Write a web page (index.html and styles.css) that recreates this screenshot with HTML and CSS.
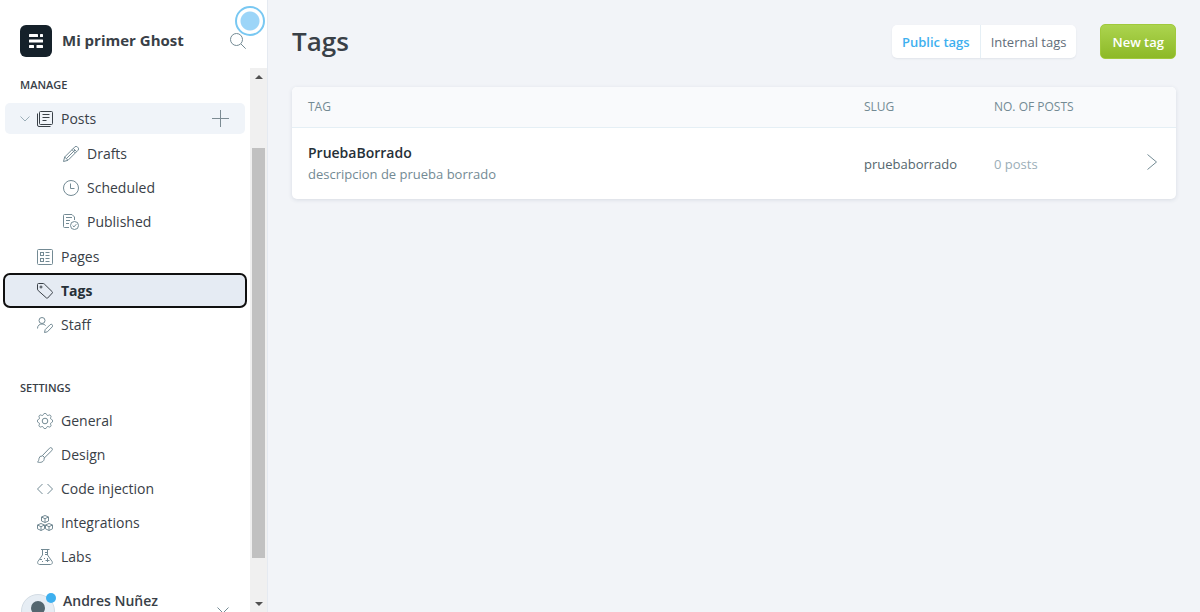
FILE: index.html
```html
<!DOCTYPE html>
<html lang="en">
<head>
<meta charset="utf-8">
<title>Tags - Mi primer Ghost</title>
<link rel="stylesheet" href="styles.css">
</head>
<body>
<div class="app">
  <aside class="sidebar">
    <header class="brand">
      <svg class="brand-logo" viewBox="0 0 32 32" aria-hidden="true">
        <rect width="32" height="32" rx="6" fill="#15212a"/>
        <g fill="#fff"><rect x="9" y="9" width="9" height="3" rx=".6"/><rect x="20" y="9" width="3" height="3" rx=".6"/><rect x="9" y="14.500" width="14" height="3" rx=".6"/><rect x="9" y="20" width="5" height="3" rx=".6"/><rect x="16.500" y="20" width="6.500" height="3" rx=".6"/></g>
      </svg>
      <span class="brand-name">Mi primer Ghost</span>
      <button class="icon-button search" type="button" aria-label="Search">
        <svg class="icon" viewBox="0 0 16 16"><circle cx="6.500" cy="6.500" r="6"/><path d="M11 11l4.700 4.700"/></svg>
      </button>
      <span class="beacon"></span>
    </header>
    <div class="sidebar-body">
      <nav class="nav">
        <h2 class="nav-title">Manage</h2>
        <ul class="nav-list">
          <li>
            <div class="nav-item nav-item-open">
              <button class="icon-button toggle" type="button" aria-label="Toggle posts"><svg class="icon-chevron" viewBox="0 0 10 6"><path d="M.5.5L5 5 9.500.5"/></svg></button>
              <a class="nav-link" href="#posts"><svg class="icon dark" viewBox="0 0 16 16"><rect x="2.500" y=".5" width="13" height="13" rx="1"/><path d="M.5 2.500V14a1.500 1.500 0 0 0 1.500 1.500h11.500M5.500 3.500h7M5.500 6.500h7M5.500 9.500h4"/></svg>Posts</a>
              <button class="icon-button add" type="button" aria-label="New post"><svg class="icon-plus" viewBox="0 0 17 17"><path d="M8.500 0v17M0 8.500h17"/></svg></button>
            </div>
            <ul class="nav-list sub-list">
              <li><a class="nav-item nav-link" href="#drafts"><svg class="icon" viewBox="0 0 16 16"><path d="M.5 15.500l1.200-4.500L11.600 1.100a2 2 0 0 1 3 0l.3.300a2 2 0 0 1 0 3L5 14.300zM1.700 11L5 14.300M10.300 2.400l3.300 3.300M3.400 12.600l8.600-8.600M9 3.700l3.300 3.300"/></svg>Drafts</a></li>
              <li><a class="nav-item nav-link" href="#scheduled"><svg class="icon" viewBox="0 0 16 16"><circle cx="8" cy="8" r="7.500"/><path d="M7.500 3.500v5h4"/></svg>Scheduled</a></li>
              <li><a class="nav-item nav-link" href="#published"><svg class="icon" viewBox="0 0 16 16"><path d="M6 13.500H1.500a1 1 0 0 1-1-1v-11a1 1 0 0 1 1-1H9L11.500 3v3M3 3.500h6M3 6.500h4M3 9.500h3"/><circle cx="11.500" cy="11.500" r="4"/><path d="M9.700 11.600l1.300 1.300 2.300-2.700"/></svg>Published</a></li>
            </ul>
          </li>
          <li><a class="nav-item nav-link" href="#pages"><svg class="icon" viewBox="0 0 16 16"><rect x=".5" y=".5" width="15" height="15" rx="1"/><rect x="3.500" y="3.500" width="3" height="3"/><rect x="3.500" y="9.500" width="3" height="3"/><path d="M8.500 3.500h4M8.500 6.500h4M8.500 9.500h4M8.500 12.500h4"/></svg>Pages</a></li>
          <li><a class="nav-item nav-link active" href="#tags" aria-current="page"><svg class="icon dark" viewBox="0 0 16 16"><path d="M.5 1.500a1 1 0 0 1 1-1H6a2 2 0 0 1 1.300.5l8 7.800a.8.800 0 0 1 0 1.200L10.700 15a.8.800 0 0 1-1.200 0L1.200 7.600A2 2 0 0 1 .5 6z"/><circle cx="4" cy="4" r="1"/></svg>Tags</a></li>
          <li><a class="nav-item nav-link" href="#staff"><svg class="icon" viewBox="0 0 16 16"><circle cx="5" cy="3.500" r="3"/><path d="M.5 11.500c0-3 2-4.500 4.500-4.500 1.500 0 2.800.6 3.600 1.600M7.500 15.500l.7-2.900 4.900-4.900a1.500 1.500 0 0 1 2.100 2.200L10.400 14.800z"/></svg>Staff</a></li>
        </ul>
        <h2 class="nav-title settings-title">Settings</h2>
        <ul class="nav-list">
          <li><a class="nav-item nav-link" href="#general"><svg class="icon" viewBox="0 0 16 16"><circle cx="8" cy="8" r="2.800"/><path d="M6.500 1.400a1.550 1.550 0 0 1 3 0 1.550 1.550 0 0 0 2.100.9 1.500 1.500 0 0 1 2.100 2.100 1.550 1.550 0 0 0 .9 2.100 1.550 1.550 0 0 1 0 3 1.550 1.550 0 0 0-.9 2.100 1.500 1.500 0 0 1-2.100 2.100 1.550 1.550 0 0 0-2.100.9 1.550 1.550 0 0 1-3 0 1.550 1.550 0 0 0-2.100-.9 1.500 1.500 0 0 1-2.100-2.100 1.550 1.550 0 0 0-.9-2.100 1.550 1.550 0 0 1 0-3 1.550 1.550 0 0 0 .9-2.100 1.500 1.500 0 0 1 2.100-2.100 1.550 1.550 0 0 0 2.100-.9z"/></svg>General</a></li>
          <li><a class="nav-item nav-link" href="#design"><svg class="icon" viewBox="0 0 16 16"><path d="M5.500 8.500L12.500 1.200a1.600 1.600 0 0 1 2.400 2.300L7.600 10.700zM5.500 8.500l2.100 2.200M5.300 9a3 3 0 0 0-3.300 2.500c-.2 1.700-.5 2.700-1.500 3.600 2.500.8 7 .4 6.700-4.200"/></svg>Design</a></li>
          <li><a class="nav-item nav-link" href="#code"><svg class="icon" viewBox="0 0 16 16"><path d="M5.500 3L.5 8l5 5M10.500 3l5 5-5 5"/></svg>Code injection</a></li>
          <li><a class="nav-item nav-link" href="#integrations"><svg class="icon" viewBox="0 0 16 16"><path d="M8 .5l3.500 1.500v4L8 7.500 4.500 6V2zM4.500 2L8 3.700 11.500 2M8 3.700v3.800M4 8.500l3.500 1.500v3.800L4 15.500.5 13.800V10zM.5 10L4 11.700 7.500 10M4 11.700v3.800M12 8.500l3.500 1.500v3.800L12 15.500l-3.500-1.700V10zM8.500 10l3.500 1.700 3.500-1.700M12 11.700v3.800"/></svg>Integrations</a></li>
          <li><a class="nav-item nav-link" href="#labs"><svg class="icon" viewBox="0 0 16 16"><path d="M4 .5h8.500M5.500.5V6L.9 12.500a2 2 0 0 0 1.600 3h11a2 2 0 0 0 1.600-3L10.500 6V.5M8 3.500h2.500M8 5.500h2.500M3 10.500h2M7 9.500h1M10.500 9v4M8.500 11.500h4M5 12.500h1"/></svg>Labs</a></li>
        </ul>
        <button class="account" type="button">
          <span class="avatar">
            <svg class="avatar-image" viewBox="0 0 34 34" aria-hidden="true"><circle cx="17" cy="17" r="16.500" fill="#e6edf4" stroke="#d3dce4"/><circle cx="17" cy="14" r="7" fill="#54666f"/><path d="M6 28c1-8 21-8 22 0a16 16 0 0 1-22 0z" fill="#54666f"/></svg>
            <span class="avatar-badge"></span>
          </span>
          <span class="account-name">Andres Nuñez</span>
          <svg class="account-chevron" viewBox="0 0 12 7"><path d="M.5.5L6 6 11.500.5"/></svg>
        </button>
      </nav>
      <div class="scrollbar" aria-hidden="true">
        <span class="arrow arrow-up"></span>
        <span class="space-before"></span>
        <span class="thumb"></span>
        <span class="space-after"></span>
        <span class="arrow arrow-down"></span>
      </div>
    </div>
  </aside>
  <main class="main">
    <header class="page-header">
      <h1 class="page-title">Tags</h1>
      <div class="tabs">
        <button class="tab selected" type="button">Public tags</button>
        <button class="tab" type="button">Internal tags</button>
      </div>
      <a class="primary" href="#new">New tag</a>
    </header>
    <table class="tags">
      <thead>
        <tr><th>Tag</th><th class="col-slug">Slug</th><th class="col-count">No. of posts</th><th class="col-open"></th></tr>
      </thead>
      <tbody>
        <tr>
          <td><a class="tag-name" href="#tag">PruebaBorrado</a><span class="tag-description">descripcion de prueba borrado</span></td>
          <td class="slug">pruebaborrado</td>
          <td class="count">0 posts</td>
          <td class="open"><a class="open-link" href="#tag" aria-label="Edit PruebaBorrado"><svg class="open-icon" viewBox="0 0 10 16"><path d="M.5.5L9.500 8l-9 7.500"/></svg></a></td>
        </tr>
      </tbody>
    </table>
  </main>
</div>
</body>
</html>
```
FILE: styles.css
```css
* { box-sizing: border-box; }
body {
  margin: 0;
  font-family: "Open Sans", "Noto Sans", sans-serif;
  font-size: 13px;
  line-height: 18px;
  color: #394047;
  background: #f2f4f8;
}
a { color: inherit; text-decoration: none; }
button { font: inherit; color: inherit; border: 0; padding: 0; background: none; cursor: pointer; }
svg { display: block; fill: none; stroke: #738a94; flex: none; }
.brand-logo, .avatar-image { stroke: none; }

.app { display: flex; height: 100vh; }
.sidebar {
  display: flex;
  flex-direction: column;
  flex: none;
  width: 268px;
  background: #fff;
  border-right: 1px solid #e5eaf1;
}

.brand { position: relative; display: flex; align-items: center; flex: none; height: 68px; padding: 14px 21px 0 20px; }
.brand-logo { width: 32px; height: 32px; }
.brand-name { flex: 1; margin-left: 10px; padding-bottom: 2px; font-size: 15px; font-weight: 700; }
.icon-button { display: flex; align-items: center; justify-content: center; }
.icon { width: 16px; height: 16px; }
.icon.dark { stroke: #394047; }
.beacon {
  position: absolute;
  top: 6px;
  right: 2px;
  width: 30px;
  height: 30px;
  border: 2px solid #79c8f2;
  border-radius: 50%;
  background: radial-gradient(circle, #9cd5f8 9px, #fff 10px);
}

.sidebar-body { display: flex; flex: 1; min-height: 0; }
.nav { flex: 1; padding: 8px 5px 0; overflow: hidden; }
.nav-title { margin: 0 0 9px 15px; font-size: 11px; font-weight: 600; text-transform: uppercase; }
.settings-title { margin-top: 39px; margin-bottom: 8px; }
.nav-list { display: flex; flex-direction: column; gap: 3px; margin: 0; padding: 0; list-style: none; }
.nav-item { height: 31px; padding-left: 32px; border-radius: 5px; }
.nav-link { display: flex; align-items: center; gap: 8px; font-size: 14px; }
.nav-item-open { display: flex; align-items: center; padding: 0 16px 0 15px; background: #f0f4f9; }
.nav-item-open .nav-link { flex: 1; margin-left: 7px; }
.sub-list { padding: 4px 0 1px; }
.sub-list .nav-item { padding-left: 58px; }
.active { background: #e5ebf3; color: #263038; font-weight: 700; outline: 2px solid #101010; }
.icon-chevron { width: 10px; height: 6px; stroke: #9baeb8; }
.icon-plus { width: 17px; height: 17px; stroke: #7c8b93; }

.account { display: flex; align-items: flex-start; width: 100%; margin-top: 20px; padding: 2px 16px 24px; text-align: left; }
.avatar { position: relative; }
.avatar-image { width: 34px; height: 34px; }
.avatar-badge { position: absolute; top: -1px; right: -1px; width: 10px; height: 10px; border-radius: 50%; background: #3eb0ef; }
.account-name { flex: 1; margin: -2px 0 0 8px; font-size: 14px; font-weight: 600; }
.account-chevron { width: 12px; height: 7px; margin-top: 13px; }

.scrollbar { display: flex; flex-direction: column; align-items: center; width: 17px; background: #f0f0f0; }
.arrow { display: flex; align-items: center; justify-content: center; height: 17px; flex: none; }
.arrow::before { content: ""; border: 4px solid transparent; }
.arrow-up::before { border-top: 0; border-bottom-color: #505050; }
.arrow-down::before { border-bottom: 0; border-top-color: #505050; }
.space-before { flex: 63; }
.thumb { flex: 410; width: 13px; background: #c1c1c1; }
.space-after { flex: 37; }

.main { flex: 1; min-width: 0; padding: 24px; }
.page-header { display: flex; align-items: center; height: 35px; margin-bottom: 28px; }
.page-title { flex: 1; margin: 0; font-size: 26px; line-height: 35px; font-weight: 600; }
.tabs { display: flex; height: 33px; margin-right: 24px; border-radius: 5px; background: #fff; box-shadow: 0 1px 2px rgba(30, 50, 80, 0.08); }
.tab { padding: 0 10px; color: #626d79; }
.tab + .tab { border-left: 1px solid #e5eff5; }
.tab.selected { color: #3eb0ef; font-weight: 600; }
.primary {
  display: flex;
  align-items: center;
  height: 35px;
  padding: 0 11px;
  border: 1px solid #a0c93c;
  border-radius: 5px;
  background: linear-gradient(#acd44f, #8db927);
  color: #fff;
  font-weight: 600;
}

.tags { width: 100%; table-layout: fixed; border-spacing: 0; background: #fff; border-radius: 5px; box-shadow: 0 1px 4px rgba(30, 50, 80, 0.12); }
.tags th { height: 41px; padding: 0 16px; border-bottom: 1px solid #e5eff5; background: #f9fafc; font-size: 12px; font-weight: 500; text-align: left; text-transform: uppercase; color: #738a94; }
.tags th:first-child { border-top-left-radius: 5px; }
.tags th:last-child { border-top-right-radius: 5px; }
.tags td { height: 71px; padding: 0 16px; }
.tags .col-slug { width: 130px; }
.tags .col-count { width: 150px; }
.tags .col-open { width: 48px; }
.tag-name { display: block; margin-bottom: 3px; font-size: 14px; font-weight: 600; color: #263038; }
.tag-description { display: block; color: #738a94; }
.slug { color: #54666d; }
.tags .count { color: #9baeb8; }
.tags .open { padding: 0 0 4px 19px; }
.open-icon { width: 10px; height: 16px; }
```
